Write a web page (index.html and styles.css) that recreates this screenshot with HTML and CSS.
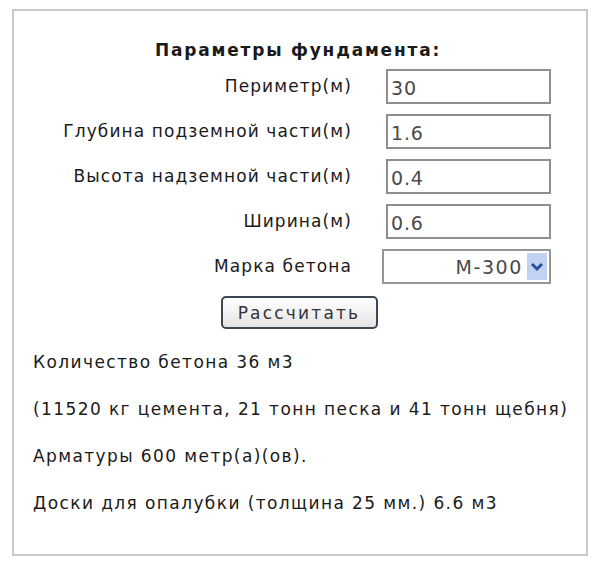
FILE: index.html
```html
<!DOCTYPE html>
<html lang="ru">
<head>
<meta charset="utf-8">
<title>Расчёт фундамента</title>
<link rel="stylesheet" href="styles.css">
</head>
<body>
<div class="calc">
  <div class="title">Параметры фундамента:</div>
  <div class="form">
    <label class="lbl">Периметр(м)</label>
    <div class="field"><input class="inp" type="text" value="30"></div>
    <label class="lbl">Глубина подземной части(м)</label>
    <div class="field"><input class="inp" type="text" value="1.6"></div>
    <label class="lbl">Высота надземной части(м)</label>
    <div class="field"><input class="inp" type="text" value="0.4"></div>
    <label class="lbl">Ширина(м)</label>
    <div class="field"><input class="inp" type="text" value="0.6"></div>
    <label class="lbl">Марка бетона</label>
    <div class="field">
      <div class="select">
        <span class="sel-text">М-300</span>
        <span class="sel-arrow"><svg width="14" height="12" viewBox="0 0 14 12"><path d="M2 3 L7 8 L12 3" fill="none" stroke="#2b4f9e" stroke-width="3"/></svg></span>
      </div>
    </div>
  </div>
  <div class="actions"><button class="btn" type="button">Рассчитать</button></div>
  <div class="results">
    <p>Количество бетона 36 м3</p>
    <p>(11520 кг цемента, 21 тонн песка и 41 тонн щебня)</p>
    <p>Арматуры 600 метр(а)(ов).</p>
    <p>Доски для опалубки (толщина 25 мм.) 6.6 м3</p>
  </div>
</div>
</body>
</html>
```
FILE: styles.css
```css
html, body {
  margin: 0;
  padding: 0;
  background: #fff;
}
body {
  padding: 9px 12px 0 12px;
  font-family: "DejaVu Sans", Verdana, sans-serif;
  font-size: 17px;
  letter-spacing: 1.1px;
  color: #1a1a1a;
}
.calc {
  width: 572px;
  height: 543px;
  border: 2px solid #c9c9c9;
  box-sizing: content-box;
}
.title {
  font-weight: bold;
  text-align: center;
  letter-spacing: 1.8px;
  margin-top: 26px;
  height: 26px;
  line-height: 26px;
  padding-right: 4px;
}
.form {
  display: grid;
  grid-template-columns: 290px 169px;
  column-gap: 30px;
  row-gap: 10px;
  margin-left: 48px;
  margin-top: 6px;
}
.lbl {
  text-align: right;
  line-height: 35px;
  height: 35px;
  white-space: nowrap;
}
.field {
  height: 35px;
  display: flex;
  align-items: center;
}
.inp {
  box-sizing: border-box;
  width: 165px;
  height: 35px;
  margin-left: 4px;
  border: 2px solid #8f8f8f;
  padding: 2px 3px 0;
  font-family: "DejaVu Sans", Verdana, sans-serif;
  font-size: 19px;
  letter-spacing: 0.8px;
  color: #4a4a4a;
  background: #fff;
}
.select {
  box-sizing: border-box;
  width: 173px;
  height: 35px;
  border: 2px solid #959595;
  display: flex;
  align-items: center;
  justify-content: flex-end;
  padding: 2px;
  font-size: 19px;
  letter-spacing: 1.6px;
  color: #4a4a4a;
}
.sel-text {
  margin-right: 4px;
}
.sel-arrow {
  width: 20px;
  height: 27px;
  background: #c1d3f3;
  display: flex;
  align-items: center;
  justify-content: center;
}
.actions {
  display: flex;
  justify-content: center;
  margin-top: 12px;
}
.btn {
  box-sizing: border-box;
  width: 157px;
  height: 33px;
  margin-left: -2px;
  border: 2px solid #3d4753;
  border-radius: 5px;
  background: linear-gradient(#ffffff, #e4e4e4);
  font-family: "DejaVu Sans", Verdana, sans-serif;
  font-size: 17px;
  letter-spacing: 2.2px;
  color: #333;
  padding: 0;
}
.results {
  padding-left: 19px;
  margin-top: 23px;
  letter-spacing: 1.4px;
}
.results p {
  margin: 0 0 26px 0;
  line-height: 21px;
  white-space: nowrap;
}
```
